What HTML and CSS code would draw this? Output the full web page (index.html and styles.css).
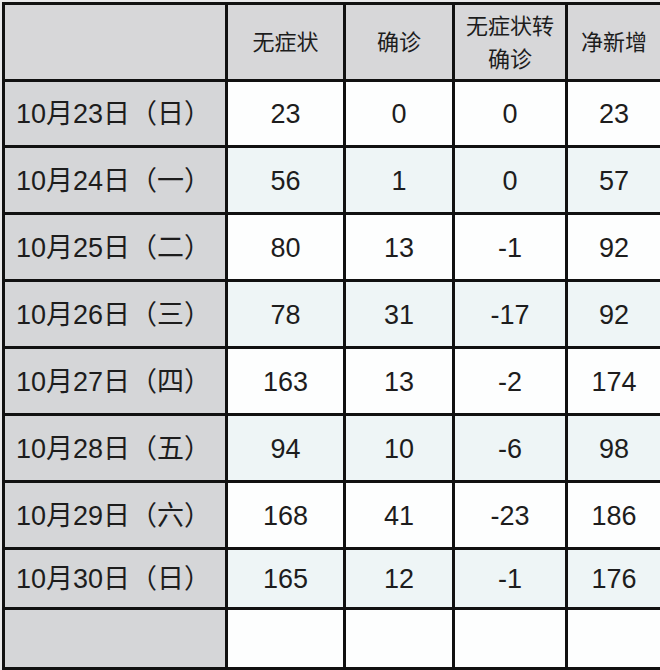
FILE: index.html
```html
<!DOCTYPE html>
<html lang="zh-CN">
<head>
<meta charset="utf-8">
<title>数据表</title>
<link rel="stylesheet" href="styles.css">
</head>
<body>
<div class="sheet">
  <div class="cell hd corner"></div>
  <div class="cell hd">无症状</div>
  <div class="cell hd">确诊</div>
  <div class="cell hd two">无症状转<br>确诊</div>
  <div class="cell hd">净新增</div>

  <div class="cell date">10月23日（日）</div>
  <div class="cell num">23</div><div class="cell num">0</div><div class="cell num">0</div><div class="cell num">23</div>

  <div class="cell date">10月24日（一）</div>
  <div class="cell num alt">56</div><div class="cell num alt">1</div><div class="cell num alt">0</div><div class="cell num alt">57</div>

  <div class="cell date">10月25日（二）</div>
  <div class="cell num">80</div><div class="cell num">13</div><div class="cell num">-1</div><div class="cell num">92</div>

  <div class="cell date">10月26日（三）</div>
  <div class="cell num alt">78</div><div class="cell num alt">31</div><div class="cell num alt">-17</div><div class="cell num alt">92</div>

  <div class="cell date">10月27日（四）</div>
  <div class="cell num">163</div><div class="cell num">13</div><div class="cell num">-2</div><div class="cell num">174</div>

  <div class="cell date">10月28日（五）</div>
  <div class="cell num alt">94</div><div class="cell num alt">10</div><div class="cell num alt">-6</div><div class="cell num alt">98</div>

  <div class="cell date">10月29日（六）</div>
  <div class="cell num">168</div><div class="cell num">41</div><div class="cell num">-23</div><div class="cell num">186</div>

  <div class="cell date">10月30日（日）</div>
  <div class="cell num alt">165</div><div class="cell num alt">12</div><div class="cell num alt">-1</div><div class="cell num alt">176</div>

  <div class="cell date"></div>
  <div class="cell num"></div><div class="cell num"></div><div class="cell num"></div><div class="cell num"></div>
</div>
</body>
</html>
```

FILE: styles.css
```css
html, body {
  margin: 0;
  padding: 0;
  background: #e9e9ea;
  overflow: hidden;
  width: 660px;
  height: 670px;
}

body {
  padding: 2px 0 0 2px;
  box-sizing: border-box;
  font-family: "Liberation Sans", "Noto Sans CJK SC", sans-serif;
  color: #1d1d1d;
}

.sheet {
  display: grid;
  grid-template-columns: 220px 115px 106px 110px 92px;
  grid-template-rows: 74px 63px 64px 64px 64px 64px 64px 64px 57px 57px;
  gap: 3px;
  padding: 3px;
  background: #111;
  width: max-content;
}

.cell {
  display: flex;
  align-items: center;
  justify-content: center;
  background: #fdfefe;
  font-size: 27px;
  line-height: 1;
}

.hd {
  background: #d7d7d9;
  font-size: 22px;
  text-align: center;
  padding-top: 2px;
}

.hd.two {
  line-height: 33px;
}

.date {
  background: #d5d6d8;
  justify-content: flex-start;
  padding-left: 11px;
  padding-top: 2px;
  white-space: nowrap;
}

.num {
  padding-top: 2px;
}

.alt {
  background: #eef5f6;
}
```
